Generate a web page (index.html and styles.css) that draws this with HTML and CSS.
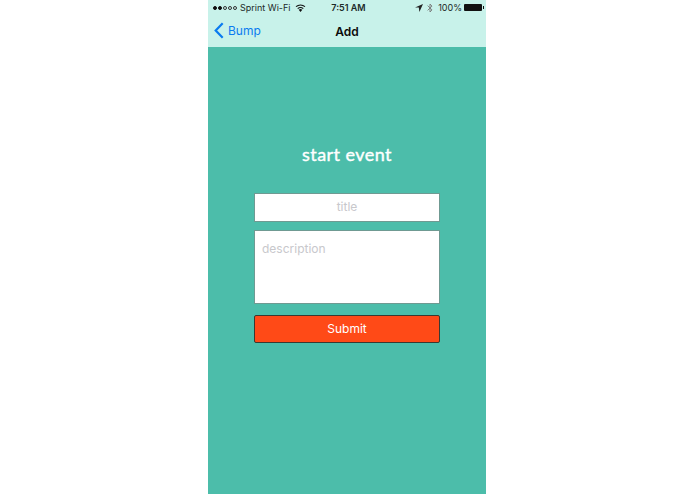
FILE: index.html
```html
<!DOCTYPE html>
<html>
<head>
<meta charset="utf-8">
<title>Add</title>
<link rel="stylesheet" href="styles.css">
</head>
<body>
<div class="phone">
  <header class="top">
    <div class="status">
      <div class="status-left">
        <span class="dots"><i class="dot on"></i><i class="dot on"></i><i class="dot"></i><i class="dot"></i><i class="dot"></i></span>
        <span>Sprint Wi-Fi</span>
        <svg class="wifi" width="11" height="8" viewBox="0 0 11 8"><path d="M5.5 8 3.7 5.8a2.8 2.8 0 0 1 3.6 0z" fill="#111"/><path d="M2.7 4.6a4.4 4.4 0 0 1 5.6 0M1 2.7a7 7 0 0 1 9 0" fill="none" stroke="#111" stroke-width="1.1"/></svg>
      </div>
      <div class="status-time">7:51 AM</div>
      <div class="status-right">
        <svg class="arrow" width="8" height="8" viewBox="0 0 8 8"><path d="M8 0 0 3.6h3.8L4.4 8z" fill="#222"/></svg>
        <svg class="bt" width="6" height="10" viewBox="0 0 6 10"><path d="M.6 2.6 5 6.9 3 9V1l2 2.100L.6 7.400" fill="none" stroke="#777" stroke-width=".9"/></svg>
        <span>100%</span>
        <span class="battery"><i class="cap"></i></span>
      </div>
    </div>
    <nav class="nav">
      <div class="back">
        <svg width="10" height="17" viewBox="0 0 10 17"><path d="M8.700 1.200 1.700 8.500l7 7.300" fill="none" stroke="#0a7bf0" stroke-width="2.200"/></svg>
        <span>Bump</span>
      </div>
      <div class="nav-title">Add</div>
    </nav>
  </header>
  <main class="content">
    <h1 class="heading">start event</h1>
    <form class="form">
      <div class="field title-field">title</div>
      <div class="field desc-field">description</div>
      <div class="submit">Submit</div>
    </form>
  </main>
</div>
</body>
</html>
```
FILE: styles.css
```css
* { box-sizing: border-box; }
html, body { margin: 0; padding: 0; background: #fff; }
body { height: 494px; overflow: hidden; font-family: "Inter", "Liberation Sans", sans-serif; }
.phone { width: 278px; height: 494px; margin-left: 208px; display: flex; flex-direction: column; background: #4cbdaa; }
.top { height: 47px; background: #c8f2ea; flex: none; }
.status { height: 15px; display: grid; grid-template-columns: 1fr auto 1fr; align-items: center; font-size: 9px; color: #1c2a28; padding: 0 2px 0 5px; }
.status-left { display: flex; align-items: center; gap: 3px; }
.dots { display: flex; gap: 1px; }
.dot { width: 4px; height: 4px; border-radius: 50%; border: .6px solid #333; }
.dot.on { background: #111; border-color: #111; }
.wifi { margin-left: 2px; }
.status-time { font-weight: 600; font-size: 9px; }
.status-right { display: flex; justify-content: flex-end; align-items: center; gap: 3px; }
.arrow { margin-right: 1px; }
.bt { margin-right: 2px; }
.battery { width: 18px; height: 7px; background: #111; border-radius: 1px; position: relative; margin-right: 2px; margin-left: -1px; }
.cap { position: absolute; right: -2px; top: 2px; width: 1px; height: 3px; background: #111; }
.nav { height: 32px; position: relative; display: flex; align-items: center; justify-content: center; }
.back { position: absolute; left: 6px; top: 7px; display: flex; align-items: center; gap: 4px; color: #0a7bf0; font-size: 12px; }
.nav-title { font-size: 12px; font-weight: 600; color: #0b0b0b; }
.content { flex: 1; display: flex; flex-direction: column; align-items: center; padding-top: 96px; }
.heading { margin: 0; height: 22px; line-height: 22px; font-family: "Lato", sans-serif; font-size: 18px; font-weight: 400; -webkit-text-stroke: .4px #fff; letter-spacing: .45px; color: #fff; }
.form { width: 186px; margin-top: 28px; display: flex; flex-direction: column; }
.field { background: #fff; border: 1px solid #6f9a92; color: #c8c8cc; font-size: 12px; }
.title-field { height: 29px; line-height: 26px; text-align: center; }
.desc-field { height: 74px; margin-top: 8px; padding: 10px 7px; line-height: 16px; }
.submit { height: 28px; margin-top: 11px; background: #ff4a17; border: 1px solid #3a3a32; border-radius: 2px; color: #fff; font-size: 12px; line-height: 26px; text-align: center; }
```
